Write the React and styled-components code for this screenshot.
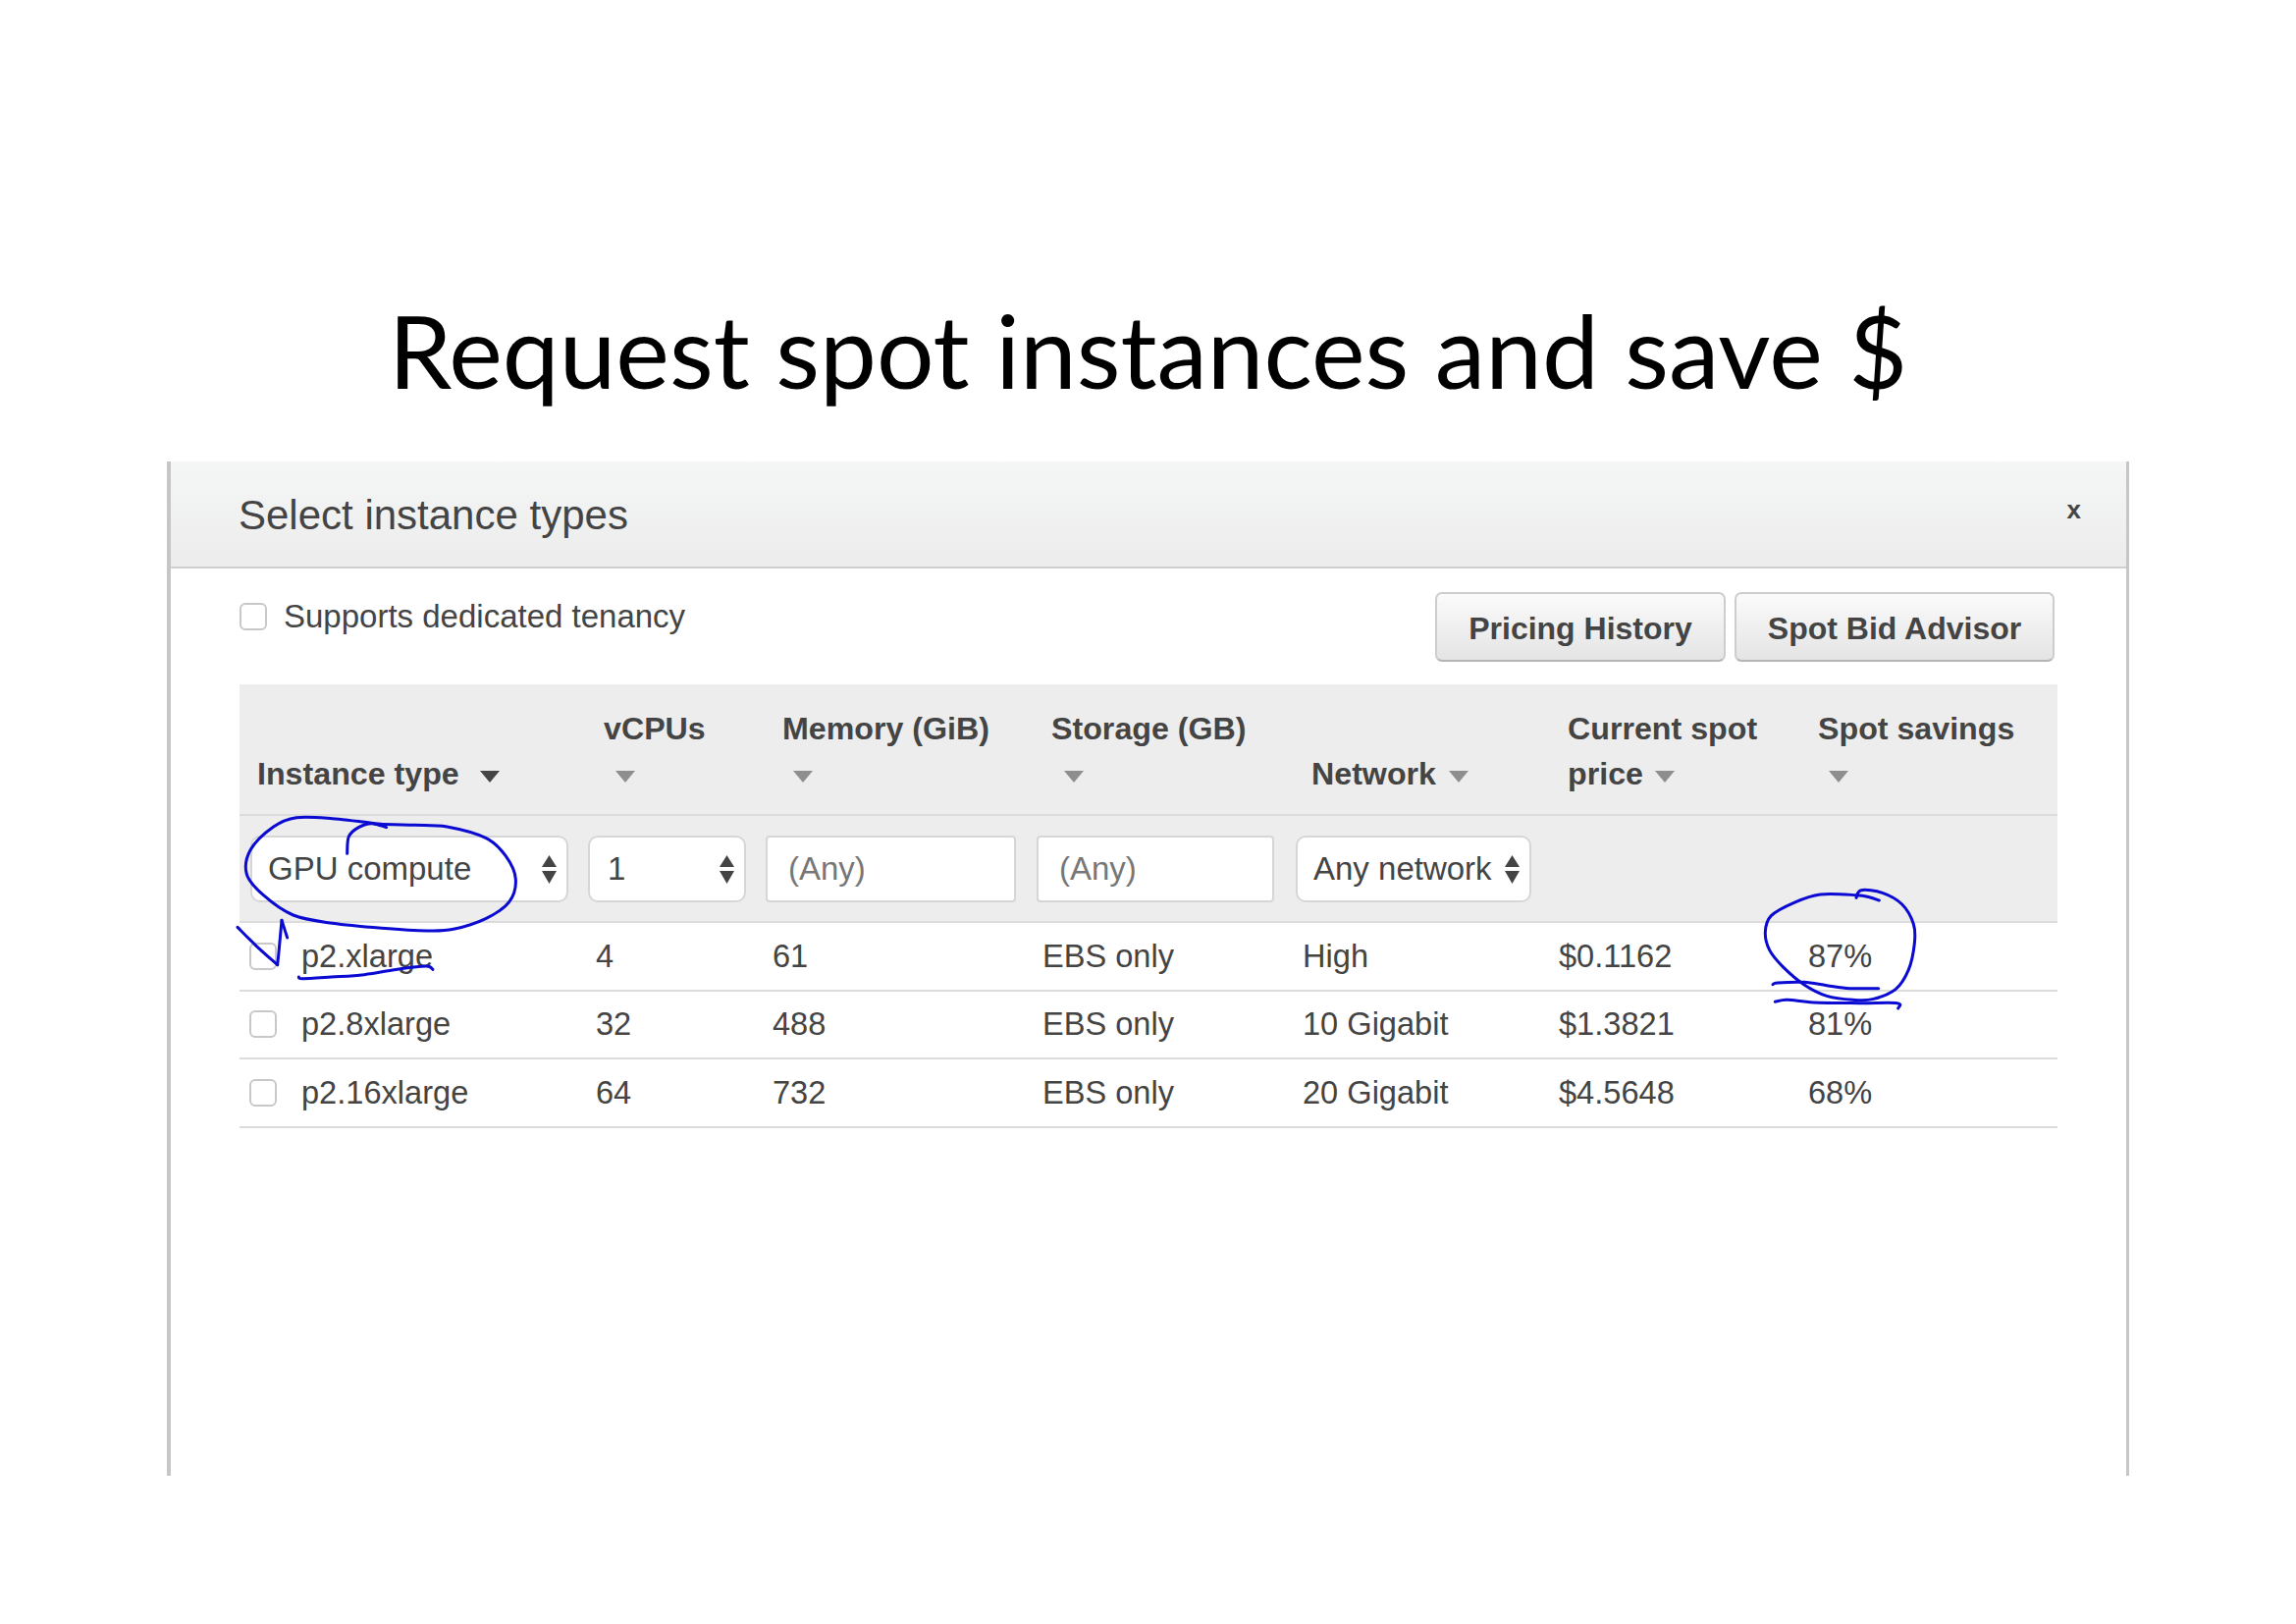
import React from "react";
import styled, { createGlobalStyle } from "styled-components";

const Global = createGlobalStyle`
  html, body { margin: 0; padding: 0; background: #fff; }
  body { font-family: "Liberation Sans", Arial, sans-serif; color: #444; }
`;

const Page = styled.div`
  position: relative;
  width: 2339px;
  height: 1654px;
  overflow: hidden;
  background: #fff;
`;

const Slide = styled.h1`
  margin: 0;
  height: 470px;
  padding-top: 298px;
  box-sizing: border-box;
  text-align: center;
  font-family: Lato, "Open Sans", sans-serif;
  font-weight: 400;
  font-size: 103.4px;
  line-height: 116px;
  color: #000;
`;

const Panel = styled.section`
  margin-left: 170px;
  width: 1999px;
  height: 1033px;
  box-sizing: border-box;
  border-left: 4px solid #c6c6c6;
  border-right: 3px solid #c6c6c6;
`;

const Head = styled.header`
  height: 109px;
  box-sizing: border-box;
  border-bottom: 2px solid #cfcfcf;
  background: linear-gradient(#f5f6f6, #ececec);
  padding: 0 46px 0 69px;
  display: flex;
  justify-content: space-between;
`;

const HeadTitle = styled.h2`
  margin: 0;
  font-weight: 400;
  font-size: 42px;
  line-height: 110px;
  color: #444;
`;

const Close = styled.span`
  font-size: 26px;
  font-weight: 700;
  line-height: 98px;
  color: #444;
`;

const Body = styled.div`
  padding: 0 70px 0 70px;
`;

const Toolbar = styled.div`
  height: 118px;
  box-sizing: border-box;
  padding: 24px 3px 0 0;
  display: flex;
  justify-content: space-between;
  align-items: flex-start;
`;

const Check = styled.span`
  display: block;
  flex: none;
  width: 28px;
  height: 28px;
  box-sizing: border-box;
  border: 2px solid #c8c8c8;
  border-radius: 6px;
  background: #fff;
`;

const Tenancy = styled.label`
  display: flex;
  align-items: center;
  gap: 17px;
  font-size: 33px;
  line-height: 50px;
`;

const Buttons = styled.div`
  display: flex;
  gap: 9px;
`;

const Button = styled.button`
  height: 71px;
  box-sizing: border-box;
  padding: 0;
  width: ${(p) => p.$w}px;
  border: 2px solid #cdcdcd;
  border-bottom-color: #b5b5b5;
  border-radius: 7px;
  background: linear-gradient(#fbfbfb, #e4e4e4);
  font-family: inherit;
  font-size: 32px;
  font-weight: 700;
  line-height: 71px;
  color: #444;
`;

const columns = "351px 180px 275px 265px 261px 254px 265px";

const HeaderRow = styled.div`
  display: grid;
  grid-template-columns: ${columns};
  align-items: end;
  height: 134px;
  box-sizing: border-box;
  padding-bottom: 18px;
  background: #ededed;
  border-bottom: 2px solid #dcdcdc;
`;

const HeaderCell = styled.div`
  padding-left: ${(p) => p.$pad}px;
  font-size: 32.2px;
  font-weight: 700;
  line-height: 46px;
  color: #444;
`;

const Caret = styled.span`
  display: inline-block;
  width: 0;
  height: 0;
  margin-left: ${(p) => p.$gap}px;
  vertical-align: 2px;
  border-left: 10px solid transparent;
  border-right: 10px solid transparent;
  border-top: 12px solid ${(p) => (p.$active ? "#444" : "#8e8e8e")};
`;

const FilterRow = styled.div`
  height: 109px;
  box-sizing: border-box;
  padding: 20px 0 0 11px;
  background: #ededed;
  border-bottom: 2px solid #dcdcdc;
  display: flex;
`;

const Field = styled.div`
  flex: none;
  width: ${(p) => p.$w}px;
  height: 68px;
  margin-right: ${(p) => p.$gap}px;
  box-sizing: border-box;
  padding: 0 10px 0 ${(p) => p.$pad}px;
  border: 2px solid #d6d6d6;
  border-radius: ${(p) => p.$r}px;
  background: #fff;
  display: flex;
  align-items: center;
  justify-content: space-between;
  font-size: 33px;
  color: ${(p) => (p.$muted ? "#777" : "#444")};
`;

const Row = styled.div`
  display: grid;
  grid-template-columns: ${columns};
  align-items: center;
  height: 69.5px;
  box-sizing: border-box;
  border-bottom: 2px solid #dcdcdc;
  font-size: 32.6px;
  color: #444;
`;

const NameCell = styled.div`
  display: flex;
  align-items: center;
  gap: 25px;
  padding-left: 10px;
`;

const Cell = styled.div`
  padding-left: 12px;
`;

const Ink = styled.svg`
  position: absolute;
  left: 0;
  top: 0;
  width: 2339px;
  height: 1654px;
  pointer-events: none;
  fill: none;
  stroke: #0a0ad2;
  stroke-linecap: round;
  stroke-linejoin: round;
`;

function smooth(points) {
  let d = `M${points[0][0]} ${points[0][1]}`;
  for (let i = 0; i < points.length - 1; i++) {
    const p0 = points[i - 1] || points[i];
    const p1 = points[i];
    const p2 = points[i + 1];
    const p3 = points[i + 2] || p2;
    const c1 = [p1[0] + (p2[0] - p0[0]) / 6, p1[1] + (p2[1] - p0[1]) / 6];
    const c2 = [p2[0] - (p3[0] - p1[0]) / 6, p2[1] - (p3[1] - p1[1]) / 6];
    d += ` C${c1[0]} ${c1[1]} ${c2[0]} ${c2[1]} ${p2[0]} ${p2[1]}`;
  }
  return d;
}

const ellipseInk = [
  [[395,172],[400,120],[430,92],[470,80],[515,92]],
  [[500,82],[350,65],[240,62],[170,90],[100,160],[88,235],[140,300],[230,360],[350,385],[500,400],[640,408],[720,403],[820,370],[890,320],[910,250],[880,180],[820,125],[700,90],[600,85],[480,82]],
];

const tickInk = [
  [[63,403],[120,460],[185,518]],
  [[185,518],[190,470],[198,382]],
  [[198,382],[215,435]],
  [[250,555],[262,560],[350,555],[450,548],[560,530],[640,522],[660,532]],
];

const rightInk = [
  [[460,78],[430,68],[390,62],[280,60],[200,85],[130,125],[112,175],[125,230],[165,280],[230,335],[300,370],[380,382],[440,380],[510,350],[550,290],[568,210],[565,150],[530,90],[470,55],[405,47],[390,70]],
  [[135,335],[150,330],[230,328],[300,338],[370,347],[458,347]],
  [[142,388],[180,382],[260,390],[400,392],[515,392],[518,408]],
];

const headers = [
  { pad: 18, label: ["Instance type"], gap: 21, active: true },
  { pad: 20, label: ["vCPUs", ""], gap: 12 },
  { pad: 22, label: ["Memory (GiB)", ""], gap: 11 },
  { pad: 21, label: ["Storage (GB)", ""], gap: 13 },
  { pad: 21, label: ["Network"], gap: 13 },
  { pad: 21, label: ["Current spot", "price"], gap: 12 },
  { pad: 22, label: ["Spot savings", ""], gap: 11 },
];

const filters = [
  { w: 324, gap: 20, pad: 16, text: "GPU compute", arrows: true, r: 10 },
  { w: 161, gap: 20, pad: 18, text: "1", arrows: true, r: 10 },
  { w: 255, gap: 21, pad: 21, text: "(Any)", muted: true, r: 4 },
  { w: 242, gap: 22, pad: 21, text: "(Any)", muted: true, r: 4 },
  { w: 240, gap: 0, pad: 16, text: "Any network", arrows: true, r: 10 },
];

const rows = [
  ["p2.xlarge", "4", "61", "EBS only", "High", "$0.1162", "87%"],
  ["p2.8xlarge", "32", "488", "EBS only", "10 Gigabit", "$1.3821", "81%"],
  ["p2.16xlarge", "64", "732", "EBS only", "20 Gigabit", "$4.5648", "68%"],
];

function Arrows() {
  return (
    <svg width="15" height="29" viewBox="0 0 15 29" style={{ flex: "none" }}>
      <path d="M7.5 0 L15 12 H0 Z M0 16 H15 L7.5 29 Z" fill="#444" />
    </svg>
  );
}

export default function App() {
  return (
    <Page>
      <Global />
      <Slide>Request spot instances and save $</Slide>
      <Panel>
        <Head>
          <HeadTitle>Select instance types</HeadTitle>
          <Close>x</Close>
        </Head>
        <Body>
          <Toolbar>
            <Tenancy>
              <Check />
              Supports dedicated tenancy
            </Tenancy>
            <Buttons>
              <Button $w={296}>Pricing History</Button>
              <Button $w={326}>Spot Bid Advisor</Button>
            </Buttons>
          </Toolbar>
          <HeaderRow>
            {headers.map((h) => (
              <HeaderCell key={h.label[0]} $pad={h.pad}>
                {h.label[0]}
                {h.label.length > 1 && <br />}
                {h.label[1]}
                <Caret $gap={h.gap} $active={h.active} />
              </HeaderCell>
            ))}
          </HeaderRow>
          <FilterRow>
            {filters.map((f, i) => (
              <Field key={i} $w={f.w} $gap={f.gap} $pad={f.pad} $r={f.r} $muted={f.muted}>
                {f.text}
                {f.arrows && <Arrows />}
              </Field>
            ))}
          </FilterRow>
          {rows.map((r) => (
            <Row key={r[0]}>
              <NameCell>
                <Check />
                {r[0]}
              </NameCell>
              {r.slice(1).map((c, i) => (
                <Cell key={i}>{c}</Cell>
              ))}
            </Row>
          ))}
        </Body>
      </Panel>
      <Ink viewBox="0 0 2339 1654">
        <g transform="translate(222 812) scale(0.3333)" strokeWidth="9">
          {ellipseInk.map((s, i) => <path key={i} d={smooth(s)} />)}
        </g>
        <g transform="translate(221 810) scale(0.3333)" strokeWidth="9">
          {tickInk.map((s, i) => <path key={i} d={smooth(s)} />)}
        </g>
        <g transform="translate(1761 891) scale(0.3333)" strokeWidth="9">
          {rightInk.map((s, i) => <path key={i} d={smooth(s)} />)}
        </g>
      </Ink>
    </Page>
  );
}
